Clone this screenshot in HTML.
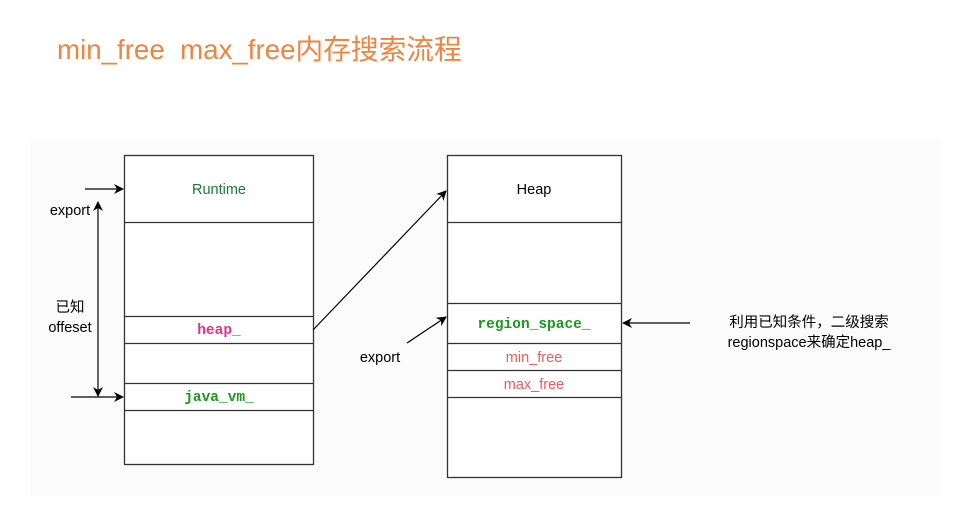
<!DOCTYPE html>
<html><head><meta charset="utf-8"><style>
html,body{margin:0;padding:0;background:#fff;width:959px;height:512px;overflow:hidden}
.t{position:absolute;left:57px;top:27px;font:27.7px "Liberation Sans","Noto Sans CJK SC",sans-serif;color:#f0843f;white-space:pre}
svg{position:absolute;left:0;top:0}
</style></head><body>
<svg width="959" height="512" xmlns="http://www.w3.org/2000/svg">
<defs>
<marker id="a" markerWidth="10" markerHeight="10" refX="9" refY="5" orient="auto" markerUnits="userSpaceOnUse"><path d="M0,0 L10,5 L0,10 L3,5 Z" fill="#000"/></marker>
<marker id="b" markerWidth="10" markerHeight="10" refX="1" refY="5" orient="auto" markerUnits="userSpaceOnUse"><path d="M10,0 L0,5 L10,10 L7,5 Z" fill="#000"/></marker>
</defs>
<rect x="30" y="140" width="910" height="356" fill="#fbfbfb"/>
<g fill="#fff" stroke="#333" stroke-width="1.3">
<rect x="124.5" y="155.5" width="189" height="309"/>
<rect x="447.5" y="155.5" width="174" height="322"/>
</g>
<g stroke="#333" stroke-width="1.3">
<line x1="124" y1="222.5" x2="313" y2="222.5"/><line x1="124" y1="316.5" x2="313" y2="316.5"/>
<line x1="124" y1="343.5" x2="313" y2="343.5"/><line x1="124" y1="383.5" x2="313" y2="383.5"/>
<line x1="124" y1="410.5" x2="313" y2="410.5"/>
<line x1="447" y1="222.5" x2="621" y2="222.5"/><line x1="447" y1="303.5" x2="621" y2="303.5"/>
<line x1="447" y1="343.5" x2="621" y2="343.5"/><line x1="447" y1="370.5" x2="621" y2="370.5"/>
<line x1="447" y1="397.5" x2="621" y2="397.5"/>
</g>
<g stroke="#000" stroke-width="1.2" fill="none">
<line x1="85" y1="189" x2="123" y2="189" marker-end="url(#a)"/>
<line x1="71" y1="397" x2="123" y2="397" marker-end="url(#a)"/>
<line x1="98" y1="202" x2="98" y2="396" marker-start="url(#b)" marker-end="url(#a)"/>
<line x1="313" y1="330" x2="446" y2="191" marker-end="url(#a)"/>
<line x1="407" y1="343" x2="446" y2="317" marker-end="url(#a)"/>
<line x1="690" y1="323" x2="623" y2="323" marker-end="url(#a)"/>
</g>
<g font-family="Liberation Sans,Noto Sans CJK SC,sans-serif" font-size="14.5" text-anchor="middle">
<text x="219" y="194" fill="#1a7a3a">Runtime</text>
<text x="534" y="194" fill="#000">Heap</text>
<text x="70" y="215" fill="#000">export</text>
<text x="70" y="312" fill="#000">已知</text>
<text x="70" y="332" fill="#000">offeset</text>
<text x="380" y="362" fill="#000">export</text>
<text x="534" y="362" fill="#f05a5a">min_free</text>
<text x="534" y="389" fill="#f05a5a">max_free</text>
<text x="809" y="327" fill="#000">利用已知条件，二级搜索</text>
<text x="809" y="347" fill="#000">regionspace来确定heap_</text>
</g>
<g font-family="Liberation Mono,monospace" font-size="14.5" font-weight="bold" text-anchor="middle">
<text x="219" y="334" fill="#e8308a">heap_</text>
<text x="219" y="401" fill="#1a9a1a">java_vm_</text>
<text x="534" y="328" fill="#1a9a1a">region_space_</text>
</g>
</svg>
<div class="t">min_free  max_free内存搜索流程</div>
</body></html>
